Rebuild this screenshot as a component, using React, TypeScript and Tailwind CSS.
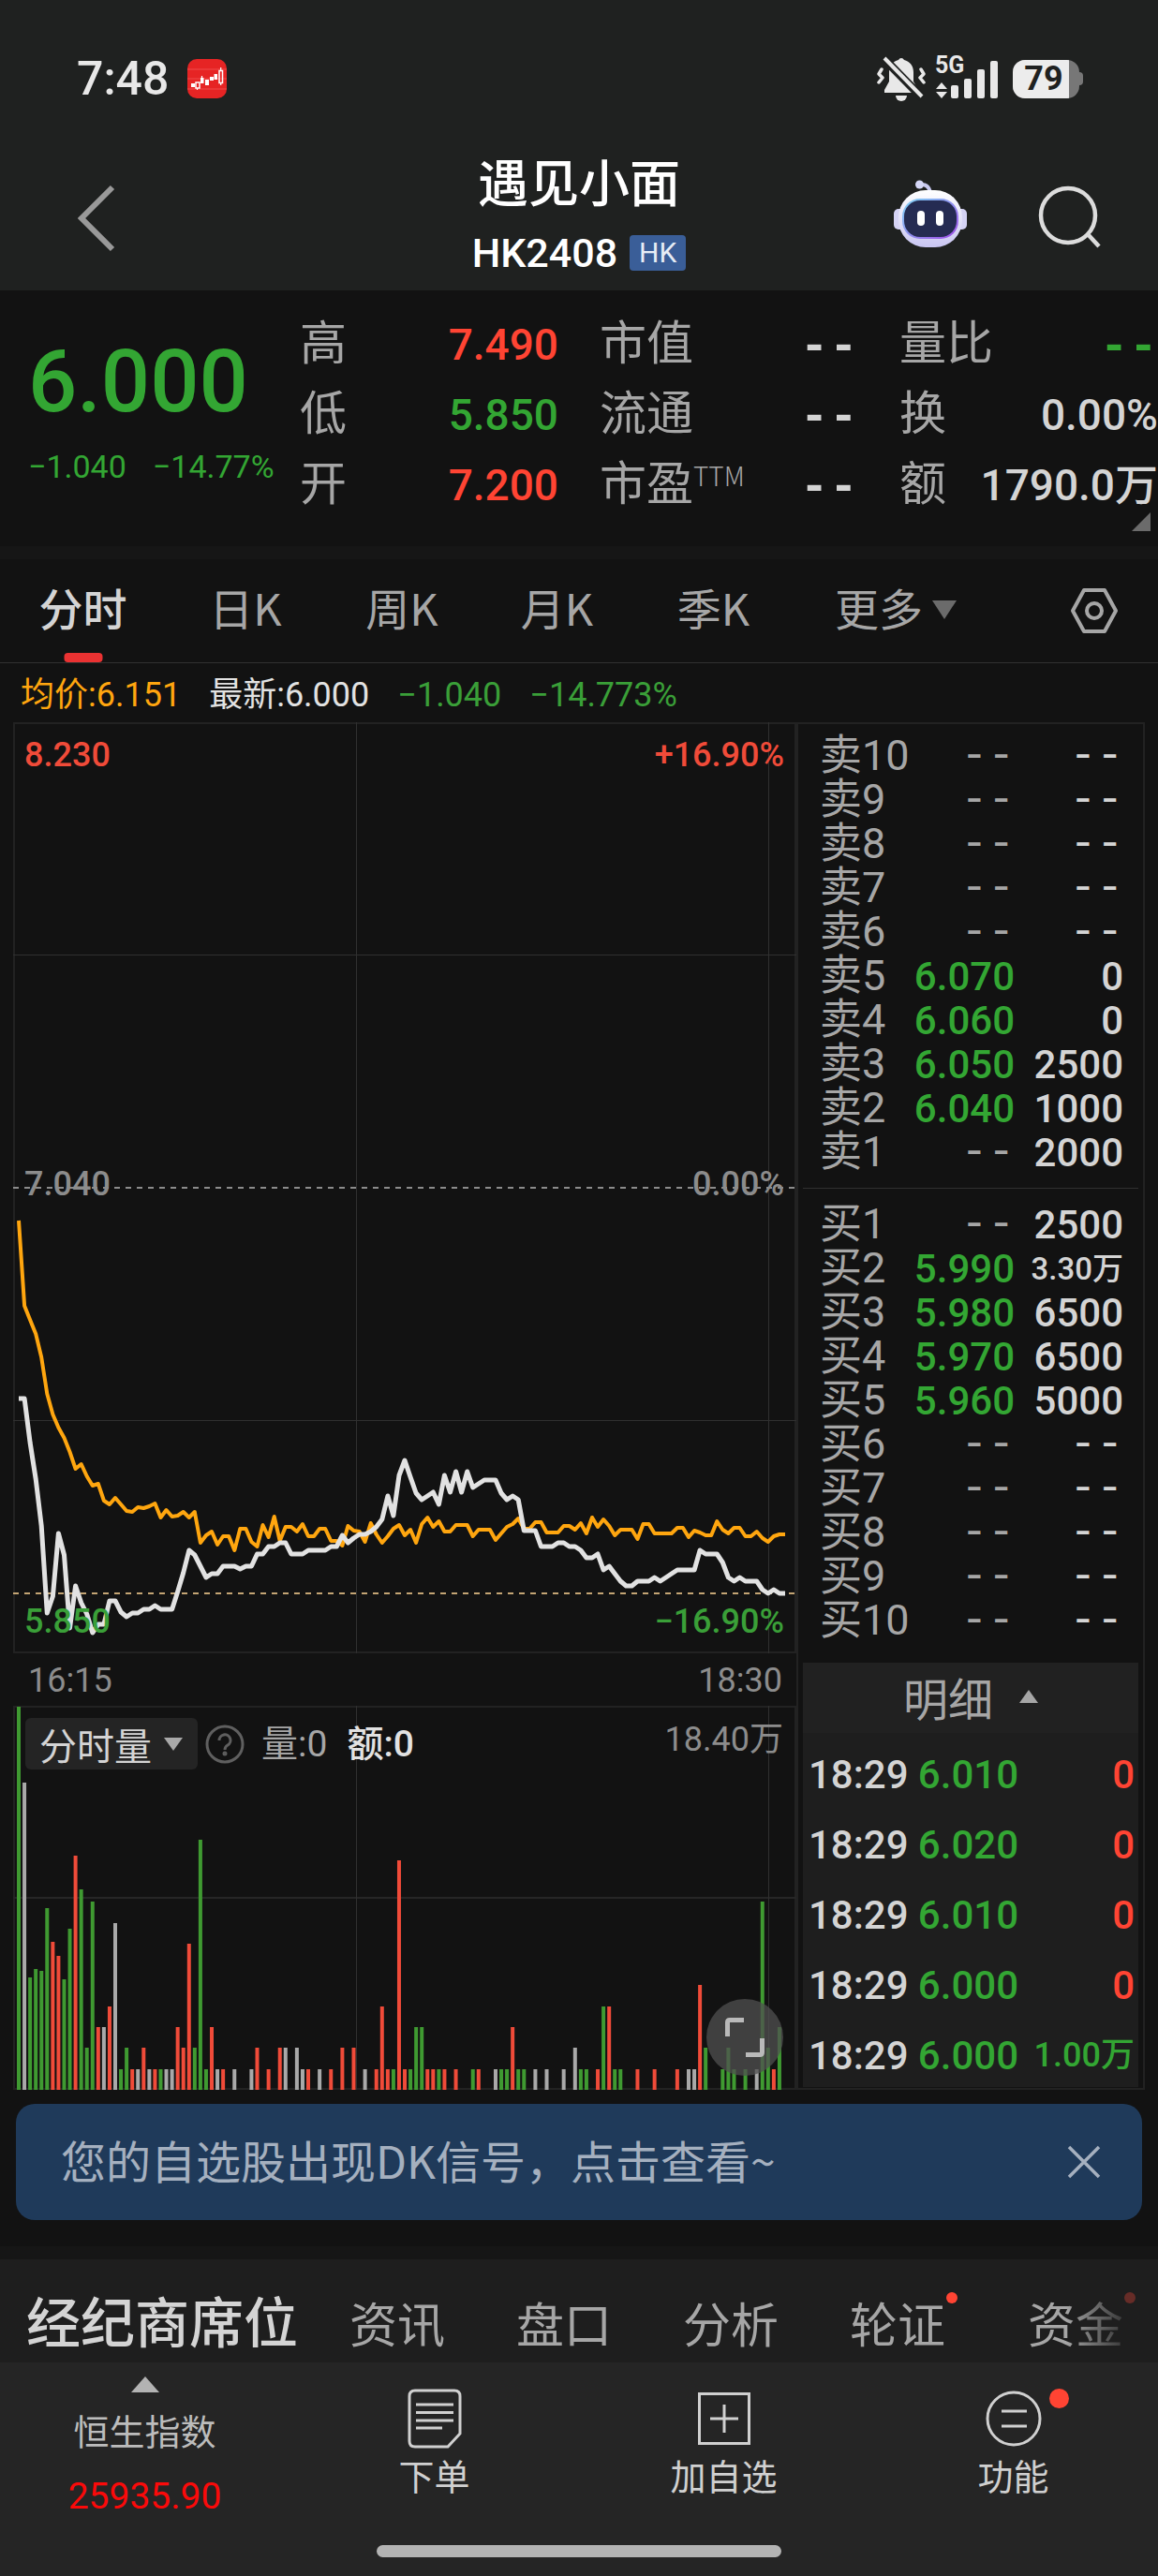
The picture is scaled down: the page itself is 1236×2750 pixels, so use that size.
import React from "react";

const CJK = "font-['Noto_Sans_CJK_SC',sans-serif]";
const DASH = "font-['Liberation_Mono',monospace] font-bold";

const RED = "text-[#ff4433]";
const GREEN = "text-[#33a633]";
const LIGHT = "text-[#d4d4d4]";

/* ---------- intraday series: one sample a minute, 16:15 to 18:30 ---------- */

const STEP = 818 / 135;
const X0 = 6;

const AVERAGE = [
  532, 623, 638, 653, 678, 717, 739, 753, 764, 779, 797, 792, 805, 815, 813, 831, 835, 828, 835, 842, 843, 838, 839,
  837, 834, 849, 841, 848, 847, 843, 849, 843, 876, 868, 864, 878, 869, 869, 884, 861, 861, 875, 880, 857, 870, 848,
  874, 859, 859, 864, 856, 869, 869, 861, 861, 874, 874, 879, 858, 863, 864, 875, 855, 867, 876, 869, 861, 857, 868,
  862, 876, 856, 849, 859, 853, 864, 864, 857, 857, 857, 869, 862, 862, 862, 873, 866, 859, 856, 850, 861, 861, 854,
  854, 865, 865, 865, 858, 858, 862, 855, 866, 849, 859, 851, 858, 868, 862, 862, 862, 872, 856, 856, 866, 866, 866,
  866, 860, 860, 870, 863, 865, 868, 868, 853, 862, 866, 860, 860, 869, 869, 864, 871, 875, 869, 867, 867,
];

const PRICE = [
  722, 722, 769, 808, 858, 951, 933, 866, 889, 967, 922, 940, 952, 972, 963, 963, 938, 938, 950, 955, 951, 951, 947,
  947, 943, 947, 947, 947, 928, 908, 884, 889, 901, 913, 909, 909, 901, 901, 901, 904, 901, 901, 888, 888, 880, 880,
  876, 876, 888, 888, 888, 884, 884, 884, 884, 880, 880, 868, 876, 871, 867, 867, 864, 859, 851, 826, 847, 804, 788,
  806, 823, 830, 826, 822, 835, 804, 822, 800, 822, 800, 817, 813, 809, 809, 809, 823, 830, 826, 830, 863, 863, 863,
  880, 880, 880, 876, 876, 880, 880, 884, 892, 892, 888, 905, 901, 909, 917, 922, 922, 917, 917, 917, 913, 917, 913,
  909, 905, 905, 905, 905, 884, 888, 888, 888, 897, 913, 917, 913, 917, 917, 917, 926, 930, 926, 930, 930,
];

type Bar = [minute: number, tone: "r" | "g" | "w", height: number];

const VOLUME: Bar[] = [
  [0, "g", 409], [1, "w", 328], [2, "g", 120], [3, "g", 129], [4, "g", 127], [5, "g", 194], [6, "r", 158],
  [7, "r", 143], [8, "g", 118], [9, "g", 172], [10, "r", 250], [11, "g", 214], [12, "g", 45], [13, "g", 201],
  [14, "r", 67], [15, "w", 67], [16, "r", 89], [17, "w", 178], [18, "g", 22], [19, "g", 45], [20, "r", 22],
  [21, "w", 22], [22, "r", 45], [23, "w", 22], [24, "r", 22], [25, "g", 22], [26, "w", 22], [27, "w", 22],
  [28, "r", 67], [29, "r", 45], [30, "r", 156], [31, "g", 45], [32, "g", 267], [33, "g", 22], [34, "r", 67],
  [35, "w", 22], [36, "r", 22], [38, "w", 22], [41, "w", 22], [42, "r", 45], [44, "r", 22], [46, "r", 45],
  [47, "w", 45], [49, "w", 45], [50, "w", 22], [51, "r", 22], [53, "w", 22], [55, "r", 22], [57, "r", 45],
  [59, "r", 45], [61, "w", 22], [63, "r", 22], [64, "r", 89], [65, "r", 22], [66, "g", 22], [67, "r", 245],
  [68, "r", 22], [69, "g", 22], [70, "g", 67], [71, "g", 67], [72, "r", 22], [73, "r", 22], [74, "g", 22],
  [75, "r", 22], [77, "r", 22], [80, "g", 22], [81, "r", 22], [84, "w", 22], [85, "g", 22], [86, "g", 22],
  [87, "r", 67], [88, "g", 22], [89, "g", 22], [91, "w", 22], [93, "w", 22], [96, "w", 22], [98, "w", 45],
  [99, "g", 22], [100, "g", 22], [102, "r", 22], [103, "g", 89], [104, "r", 89], [105, "g", 22], [106, "g", 22],
  [109, "r", 22], [112, "r", 22], [116, "r", 22], [118, "w", 22], [119, "w", 22], [120, "r", 112], [121, "g", 45],
  [124, "g", 22], [125, "g", 45], [126, "g", 22], [128, "g", 22], [130, "w", 22], [131, "g", 201], [132, "g", 45],
  [133, "r", 22], [134, "g", 67],
];

const TONES = { r: "#f04b39", g: "#3f9a31", w: "#a9a9a9" };

const toPoints = (ys: number[]) => ys.map((y, i) => `${(X0 + i * STEP).toFixed(1)},${y}`).join(" ");

/* ------------------------------- header ---------------------------------- */

function StatusBar() {
  return (
    <div className="flex h-[50px] items-center justify-between pl-[82px] pr-[80px] text-[#e8e8e8]">
      <div className="flex items-center gap-[20px]">
        <span className="text-[50px] font-medium leading-[50px]">7:48</span>
        <svg width="42" height="42" viewBox="0 0 42 42" aria-hidden="true">
          <rect width="42" height="42" rx="10" fill="#e62424" />
          <path d="M0 11h42M0 21h42M0 32h42" stroke="#f04a4a" strokeWidth="1" />
          <g fill="#fff">
            <rect x="4" y="26" width="4" height="4" />
            <rect x="9" y="25" width="4" height="6" fill="none" stroke="#fff" strokeWidth="1.5" />
            <rect x="14" y="20" width="3.5" height="6" />
            <rect x="19" y="22" width="4" height="6" />
            <rect x="24" y="19" width="4" height="4" />
            <rect x="28.500" y="16" width="3.500" height="6" />
            <rect x="34" y="12.500" width="3.500" height="13" fill="none" stroke="#fff" strokeWidth="1.5" />
            <path d="M10.500 31v2M15.500 18v2M35.700 9v3M35.700 26v2" stroke="#fff" strokeWidth="1.2" />
          </g>
        </svg>
      </div>
      <div className="flex items-center">
        <svg width="52" height="48" viewBox="0 0 52 48" fill="#e8e8e8" aria-hidden="true">
          <path d="M26 2a4 4 0 0 1 3 2c6 1.500 10 6 10 13v10l5 9v3H8v-3l5-9V17c0-7 4-11.500 10-13a4 4 0 0 1 3-2z" />
          <path d="M20 42h12a6 6 0 0 1-12 0z" />
          <path d="M6 1L49 45" stroke="#1f2120" strokeWidth="9" />
          <path d="M8 2L48 43" stroke="#e8e8e8" strokeWidth="4" />
          <g fill="none" stroke="#e8e8e8" strokeWidth="3.500" strokeLinecap="round" strokeLinejoin="round">
            <path d="M5 14l-3 5 4 4-4 5M47 14l3 5-4 4 4 5" />
          </g>
        </svg>
        <div className="relative ml-[10px] mr-[15px]">
          <span className="absolute left-0 top-0 text-[25px] font-bold leading-[18px]">5G</span>
          <svg width="68" height="46" viewBox="0 0 68 46" aria-hidden="true" fill="#e8e8e8">
            <path d="M7 27l6 7H1zM7 44l6-7H1z" />
            <rect x="17" y="30" width="8" height="14" rx="2" />
            <rect x="31" y="23" width="8" height="21" rx="2" />
            <rect x="45" y="13" width="8" height="31" rx="2" />
            <rect x="59" y="4" width="8" height="40" rx="2" />
          </svg>
        </div>
        <div className="flex h-[41px] w-[71px] overflow-hidden rounded-[13px] bg-[#777]">
          <span className="w-[60px] bg-[#ececec] pl-[6px] text-center text-[36px] font-bold leading-[41px] text-[#1f2120]">
            79
          </span>
        </div>
        <span className="h-[14px] w-[4px] rounded-r-[4px] bg-[#777]" />
      </div>
    </div>
  );
}

function Robot() {
  return (
    <svg width="78" height="74" viewBox="0 0 78 74" aria-hidden="true">
      <defs>
        <linearGradient id="shell" x1="0" y1="0" x2="0" y2="1">
          <stop offset="0" stopColor="#ffffff" />
          <stop offset="1" stopColor="#c9c6f2" />
        </linearGradient>
        <linearGradient id="rim" x1="0" y1="0" x2="1" y2="1">
          <stop offset="0" stopColor="#7fd6f5" />
          <stop offset="1" stopColor="#a04be8" />
        </linearGradient>
      </defs>
      <path d="M27 6q10-3 12 8" fill="none" stroke="#c9caf0" strokeWidth="4" />
      <circle cx="27.500" cy="5" r="4.500" fill="#d6d8f8" />
      <rect x="0" y="31" width="12" height="22" rx="5" fill="#d5d3f5" />
      <rect x="66" y="31" width="12" height="22" rx="5" fill="#d5d3f5" />
      <rect x="5" y="11" width="68" height="61" rx="29" fill="url(#shell)" />
      <rect x="9" y="20" width="60" height="43" rx="19" fill="url(#rim)" />
      <rect x="11" y="22" width="56" height="39" rx="17" fill="#252b52" />
      <rect x="25" y="33" width="8" height="16" rx="4" fill="#fff" />
      <rect x="45" y="33" width="8" height="16" rx="4" fill="#fff" />
    </svg>
  );
}

function Header() {
  return (
    <header className="bg-[#1f2120] pt-[59px]">
      <StatusBar />
      <div className="mt-[54px] grid h-[147px] grid-cols-[1fr_auto_1fr]">
        <button type="button" aria-label="返回" className="ml-[82px] mt-[34px] h-[72px] w-[44px]">
          <svg width="44" height="72" viewBox="0 0 44 72" fill="none" stroke="#999" strokeWidth="6" aria-hidden="true">
            <path d="M38 3L5 36l33 33" />
          </svg>
        </button>
        <div className="flex flex-col items-center">
          <h1 className={`${CJK} text-[54px] font-medium leading-[60px] text-white`}>遇见小面</h1>
          <p className="mt-[22px] flex items-center gap-[13px] text-white">
            <span className="text-[43px] font-medium leading-[50px]">HK2408</span>
            <span className="rounded-[4px] bg-[#3a5e98] px-[10px] text-[30px] leading-[38px] text-[#e6ecf5]">HK</span>
          </p>
        </div>
        <div className="flex items-start justify-end gap-[76px] pr-[60px]">
          <button type="button" aria-label="智能助手" className="mt-[29px]">
            <Robot />
          </button>
          <button type="button" aria-label="搜索" className="mt-[35px]">
            <svg width="68" height="68" viewBox="0 0 68 68" fill="none" stroke="#dcdcdc" strokeWidth="4.500" aria-hidden="true">
              <circle cx="32" cy="32" r="29" />
              <path d="M53 52l12 13" />
            </svg>
          </button>
        </div>
      </div>
    </header>
  );
}

/* ------------------------------ quote panel ------------------------------ */

function Stat({ label, sup, value, tone }: { label: string; sup?: string; value: string; tone: string }) {
  const face = value === "--" ? `${DASH} text-[52px]` : "text-[46px] font-medium";
  return (
    <div className="flex h-[75px] items-baseline justify-between whitespace-nowrap leading-[75px]">
      <dt className={`${CJK} text-[50px] text-[#a6a6a6]`}>
        {label}
        {sup && <sup className="relative top-[-15px] align-baseline text-[28px] font-light leading-none">{sup}</sup>}
      </dt>
      <dd className={`${face} ${tone}`}>{value}</dd>
    </div>
  );
}

function Quote() {
  return (
    <section className="relative flex pb-[33px] pt-[15px]">
      <div className={`w-[320px] shrink-0 pl-[30px] ${GREEN}`}>
        <p className="mt-[33px] text-[92px] font-medium leading-[100px]">6.000</p>
        <p className="mt-[15px] flex gap-[28px] whitespace-nowrap text-[34px] leading-[50px]">
          <span>−1.040</span>
          <span>−14.77%</span>
        </p>
      </div>
      <dl className="grid flex-1 grid-cols-3 gap-x-[44px]">
        <Stat label="高" value="7.490" tone={RED} />
        <Stat label="市值" value="--" tone={LIGHT} />
        <Stat label="量比" value="--" tone={GREEN} />
        <Stat label="低" value="5.850" tone={GREEN} />
        <Stat label="流通" value="--" tone={LIGHT} />
        <Stat label="换" value="0.00%" tone={LIGHT} />
        <Stat label="开" value="7.200" tone={RED} />
        <Stat label="市盈" sup="TTM" value="--" tone={LIGHT} />
        <Stat label="额" value="1790.0万" tone={LIGHT} />
      </dl>
      <svg className="absolute bottom-[16px] right-[8px]" width="20" height="20" viewBox="0 0 20 20" aria-hidden="true">
        <path d="M20 0v20H0z" fill="#6b6b6b" />
      </svg>
    </section>
  );
}

function PeriodTabs() {
  const tab = `${CJK} relative h-[110px] pb-[8px] text-[47px]`;
  return (
    <nav className="grid grid-cols-[177fr_170fr_164fr_167fr_167fr_222fr_169fr] border-b border-[#303030] text-[#a6a6a6]">
      <button type="button" className={`${tab} font-medium text-[#d4d4d4]`}>
        分时
        <span className="absolute bottom-0 left-1/2 h-[10px] w-[41px] -translate-x-1/2 rounded-[4px] bg-[#ea3232]" />
      </button>
      <button type="button" className={tab}>日K</button>
      <button type="button" className={tab}>周K</button>
      <button type="button" className={tab}>月K</button>
      <button type="button" className={tab}>季K</button>
      <button type="button" className={`${tab} flex items-center justify-center gap-[10px]`}>
        更多
        <svg className="mt-[6px]" width="26" height="20" viewBox="0 0 26 20" aria-hidden="true">
          <path d="M0 0h26L13 20z" fill="#6b6b6b" />
        </svg>
      </button>
      <button type="button" aria-label="图表设置" className="flex items-center justify-end pr-[42px]">
        <svg width="52" height="50" viewBox="0 0 52 50" fill="none" stroke="#a6a6a6" strokeWidth="4" strokeLinejoin="round" aria-hidden="true">
          <path d="M15 3h22l12 22-12 22H15L3 25z" />
          <circle cx="26" cy="25" r="8" />
        </svg>
      </button>
    </nav>
  );
}

/* -------------------------------- charts --------------------------------- */

function PriceChart() {
  const label = "absolute text-[36px] font-medium leading-[40px]";
  return (
    <div className="relative h-[994px]">
      <svg className="h-full w-full" viewBox="0 0 836 994" preserveAspectRatio="none" role="img" aria-label="分时走势">
        <rect x="1" y="1" width="834" height="992" fill="none" stroke="#222" strokeWidth="2" />
        <path d="M0 248.500H836M0 745.500H836M366.500 0V994M806.500 0V994" stroke="#303030" />
        <path d="M0 497H836" stroke="#8c8c8c" strokeWidth="2" strokeDasharray="6 6" />
        <path d="M0 930H836" stroke="#c4a574" strokeWidth="2" strokeDasharray="6 6" />
        <polyline points={toPoints(AVERAGE)} fill="none" stroke="#ffa60f" strokeWidth="4" strokeLinejoin="round" />
        <polyline points={toPoints(PRICE)} fill="none" stroke="#e2e2e2" strokeWidth="5" strokeLinejoin="round" />
      </svg>
      <span className={`${label} left-[12px] top-[15px] text-[#f04b39]`}>8.230</span>
      <span className={`${label} right-[13px] top-[15px] text-[#f04b39]`}>+16.90%</span>
      <span className={`${label} left-[12px] top-[473px] text-[#8c8c8c]`}>7.040</span>
      <span className={`${label} right-[13px] top-[473px] text-[#8c8c8c]`}>0.00%</span>
      <span className={`${label} bottom-[14px] left-[12px] text-[#3a9f38]`}>5.850</span>
      <span className={`${label} bottom-[14px] right-[13px] text-[#3a9f38]`}>−16.90%</span>
    </div>
  );
}

function VolumeChart() {
  return (
    <div className="relative h-[410px]">
      <svg className="h-full w-full" viewBox="0 0 836 410" preserveAspectRatio="none" role="img" aria-label="分时成交量">
        <rect x="1" y="1" width="834" height="408" fill="none" stroke="#222" strokeWidth="2" />
        <path d="M0 205H836" stroke="#262626" strokeWidth="2" />
        <path d="M366.500 0V410M806.500 0V410" stroke="#303030" />
        {VOLUME.map(([minute, tone, height]) => (
          <rect key={minute} x={X0 - 2 + minute * STEP} y={410 - height} width="4" height={height} fill={TONES[tone]} />
        ))}
      </svg>
      <div className="absolute left-[13px] right-[14px] top-[13px] flex items-start text-[39px] leading-[57px]">
        <div className="relative">
          <select
            aria-label="指标"
            className={`${CJK} h-[55px] w-[184px] appearance-none rounded-[6px] bg-[#242424] pl-[15px] text-[40px] leading-[50px] text-[#d4d4d4]`}
          >
            <option>分时量</option>
          </select>
          <svg className="pointer-events-none absolute right-[16px] top-[21px]" width="20" height="14" viewBox="0 0 20 14" aria-hidden="true">
            <path d="M0 0h20L10 14z" fill="#a9a9a9" />
          </svg>
        </div>
        <button type="button" aria-label="说明" className="ml-[8px] mt-[7px]">
          <svg width="42" height="42" viewBox="0 0 42 42" fill="none" stroke="#5f5f5f" strokeWidth="3" aria-hidden="true">
            <circle cx="21" cy="21" r="19" />
            <path d="M15 17a6 6 0 1 1 9 5c-2.500 1.500-3 2.500-3 5" />
            <circle cx="21" cy="31" r="1" fill="#5f5f5f" />
          </svg>
        </button>
        <span className="ml-[18px] text-[#a6a6a6]">量:0</span>
        <span className="ml-[21px] font-medium text-[#e2e2e2]">额:0</span>
        <span className="ml-auto text-[36px] leading-[46px] text-[#8c8c8c]">18.40万</span>
      </div>
      <button
        type="button"
        aria-label="全屏"
        className="absolute bottom-[15px] right-[14px] flex h-[82px] w-[82px] items-center justify-center rounded-full bg-[#505050]/75"
      >
        <svg width="46" height="46" viewBox="0 0 46 46" fill="none" stroke="#b9b9b9" strokeWidth="5" aria-hidden="true">
          <path d="M22 4.500H7q-2.500 0-2.500 2.500v15M24 41.500h15q2.500 0 2.500-2.500V24" />
        </svg>
      </button>
    </div>
  );
}

/* ------------------------------ order book ------------------------------- */

type Level = [name: string, price: string, amount: string];

const ASKS: Level[] = [
  ["卖10", "--", "--"], ["卖9", "--", "--"], ["卖8", "--", "--"], ["卖7", "--", "--"], ["卖6", "--", "--"],
  ["卖5", "6.070", "0"], ["卖4", "6.060", "0"], ["卖3", "6.050", "2500"], ["卖2", "6.040", "1000"], ["卖1", "--", "2000"],
];

const BIDS: Level[] = [
  ["买1", "--", "2500"], ["买2", "5.990", "3.30万"], ["买3", "5.980", "6500"], ["买4", "5.970", "6500"],
  ["买5", "5.960", "5000"], ["买6", "--", "--"], ["买7", "--", "--"], ["买8", "--", "--"], ["买9", "--", "--"],
  ["买10", "--", "--"],
];

const TRADES = [
  ["18:29", "6.010", "0"], ["18:29", "6.020", "0"], ["18:29", "6.010", "0"], ["18:29", "6.000", "0"],
  ["18:29", "6.000", "1.00万"],
];

const LEVEL_DASH = "font-['Liberation_Mono',monospace] text-[48px]";

function Levels({ rows, name }: { rows: Level[]; name: string }) {
  return (
    <table aria-label={name} className="w-full table-fixed whitespace-nowrap">
      <colgroup>
        <col className="w-[104px]" />
        <col />
        <col className="w-[132px]" />
      </colgroup>
      <tbody>
        {rows.map(([label, price, amount]) => (
          <tr key={label} className="h-[47px] leading-[45px]">
            <th scope="row" className="p-0 pl-[18px] text-left align-middle text-[45px] font-normal text-[#a6a6a6]">
              {label}
            </th>
            <td className={`p-0 pt-[2px] text-right align-middle ${price === "--" ? `${LEVEL_DASH} text-[#a6a6a6]` : "text-[42px] font-medium text-[#33a633]"}`}>
              {price}
            </td>
            <td className={`p-0 pr-[16px] pt-[2px] text-right align-middle text-[#d4d4d4] ${amount === "--" ? LEVEL_DASH : amount.endsWith("万") ? "text-[33px] font-medium" : "text-[42px] font-medium"}`}>
              {amount}
            </td>
          </tr>
        ))}
      </tbody>
    </table>
  );
}

function OrderBook() {
  return (
    <aside className="flex w-[372px] shrink-0 flex-col border-2 border-[#222] px-[5px] pb-[1px] pt-[10px]">
      <Levels rows={ASKS} name="卖盘" />
      <hr className="mb-[14px] mt-[15px] border-[#303030]" />
      <Levels rows={BIDS} name="买盘" />
      <button type="button" className={`${CJK} mt-[22px] flex h-[75px] items-center justify-center gap-[28px] bg-[#212121] pb-[4px] text-[48px] text-[#a6a6a6]`}>
        明细
        <svg width="20" height="14" viewBox="0 0 20 14" aria-hidden="true">
          <path d="M0 14h20L10 0z" fill="#a6a6a6" />
        </svg>
      </button>
      <div className="bg-[#1e1e1e] pt-[3px]">
        <table aria-label="成交明细" className="w-full table-fixed whitespace-nowrap text-[42px] font-medium">
          <colgroup>
            <col className="w-[116px]" />
            <col className="w-[114px]" />
            <col />
          </colgroup>
          <tbody>
            {TRADES.map(([time, price, amount], i) => (
              <tr key={i} className="leading-[67px]">
                <td className="p-0 pl-[6px] pt-[8px] align-middle text-[#d4d4d4]">{time}</td>
                <td className="p-0 pt-[8px] text-right align-middle text-[#33a633]">{price}</td>
                <td className={`p-0 pr-[4px] pt-[8px] text-right align-middle ${amount === "0" ? "text-[#ff4433]" : "text-[36px] text-[#33a633]"}`}>
                  {amount}
                </td>
              </tr>
            ))}
          </tbody>
        </table>
      </div>
    </aside>
  );
}

/* ------------------------------ lower parts ------------------------------ */

function SignalBanner() {
  return (
    <section className={`${CJK} mx-[17px] mt-[15px] flex h-[124px] items-center justify-between rounded-[20px] bg-[#1f3a5a] pl-[48px] pr-[44px] text-[#a5b0bf]`}>
      <a href="#signal" className="whitespace-nowrap pb-[6px] text-[48px] leading-[60px]">
        您的自选股出现DK信号，点击查看~
      </a>
      <button type="button" aria-label="关闭">
        <svg width="36" height="36" viewBox="0 0 36 36" fill="none" stroke="#a5b0bf" strokeWidth="3.500" aria-hidden="true">
          <path d="M2 2l32 32M34 2L2 34" />
        </svg>
      </button>
    </section>
  );
}

function SectionTabs() {
  const tab = "relative shrink-0 text-[51px] leading-[60px] text-[#a6a6a6]";
  return (
    <nav className={`${CJK} flex h-[110px] items-baseline overflow-hidden whitespace-nowrap bg-[#1e1e1e] pl-[28px] pt-[28px]`}>
      <button type="button" className="mr-[55px] shrink-0 text-[58px] font-medium leading-[72px] text-[#d4d4d4]">
        经纪商席位
      </button>
      <button type="button" className={`${tab} mr-[76px]`}>资讯</button>
      <button type="button" className={`${tab} mr-[76px]`}>盘口</button>
      <button type="button" className={`${tab} mr-[76px]`}>分析</button>
      <button type="button" className={`${tab} mr-[88px]`}>
        轮证
        <span className="absolute -right-[13px] -top-[2px] h-[12px] w-[12px] rounded-full bg-[#ff4433]" />
      </button>
      <button type="button" className={tab}>
        <span className="bg-gradient-to-r from-[#a6a6a6] from-40% to-[#3a3a3a] bg-clip-text text-transparent">资金</span>
        <span className="absolute -right-[13px] -top-[2px] h-[12px] w-[12px] rounded-full bg-[#662c27]" />
      </button>
    </nav>
  );
}

function BottomBar() {
  const label = `${CJK} text-[38px] leading-[48px] text-[#d0d0d0]`;
  const item = "flex flex-col items-center pt-[28px]";
  return (
    <footer className="bg-[#252525] pb-[20px]">
      <nav className="grid h-[167px] grid-cols-4">
        <a href="#index" className="flex flex-col items-center pt-[15px]">
          <svg width="30" height="17" viewBox="0 0 30 17" aria-hidden="true">
            <path d="M0 17h30L15 0z" fill="#b3b3b3" />
          </svg>
          <span className={`${CJK} mt-[16px] text-[38px] leading-[48px] text-[#bcbcbc]`}>恒生指数</span>
          <span className="mt-[23px] text-[39px] leading-[48px] text-[#fa0a0a]">25935.90</span>
        </a>
        <button type="button" className={item}>
          <svg width="60" height="64" viewBox="0 0 60 64" fill="none" stroke="#d0d0d0" strokeWidth="3" aria-hidden="true">
            <path d="M9 2h42q6 0 6 6v40L44 62H9q-6 0-6-6V8q0-6 6-6z" />
            <path d="M10 17h40M10 25.500h40M10 34h40M10 42h28" />
          </svg>
          <span className={`${label} mt-[4px]`}>下单</span>
        </button>
        <button type="button" className={item}>
          <svg width="60" height="64" viewBox="0 0 60 64" fill="none" stroke="#d0d0d0" strokeWidth="3" aria-hidden="true">
            <rect x="3.500" y="5.500" width="53" height="53" />
            <path d="M30 17v30M15 32h30" />
          </svg>
          <span className={`${label} mt-[4px]`}>加自选</span>
        </button>
        <button type="button" className={item}>
          <span className="relative">
            <svg width="60" height="64" viewBox="0 0 60 64" fill="none" stroke="#d0d0d0" strokeWidth="3" aria-hidden="true">
              <circle cx="30" cy="32" r="28" />
              <path d="M17 24h27M17 40h27" />
            </svg>
            <span className="absolute -right-[29px] top-0 h-[21px] w-[21px] rounded-full bg-[#ff4433]" />
          </span>
          <span className={`${label} mt-[4px]`}>功能</span>
        </button>
      </nav>
      <div className="mx-auto mt-[28px] h-[13px] w-[432px] rounded-full bg-[#b3b3b3]" />
    </footer>
  );
}

export default function App() {
  return (
    <div className="flex w-full flex-col overflow-hidden bg-[#121212] font-['Roboto','Noto_Sans_CJK_SC',sans-serif]">
      <Header />
      <main>
        <Quote />
        <div className="h-[14px] bg-[#161616]" />
        <PeriodTabs />
        <p className="flex h-[63px] gap-[30px] whitespace-nowrap pl-[22px] pt-[6px] text-[36px] leading-[57px]">
          <span className="text-[#ffa60f]">均价:6.151</span>
          <span className="text-[#e2e2e2]">最新:6.000</span>
          <span className="text-[#3a9f38]">−1.040</span>
          <span className="text-[#3a9f38]">−14.773%</span>
        </p>
        <div className="flex px-[14px]">
          <div className="min-w-0 flex-1">
            <PriceChart />
            <div className="flex h-[56px] items-center justify-between pl-[16px] pr-[15px] pt-[2px] text-[36px] text-[#8c8c8c]">
              <span>16:15</span>
              <span>18:30</span>
            </div>
            <VolumeChart />
          </div>
          <OrderBook />
        </div>
        <SignalBanner />
        <div className="mt-[28px] h-[14px] bg-[#161616]" />
        <SectionTabs />
      </main>
      <BottomBar />
    </div>
  );
}
